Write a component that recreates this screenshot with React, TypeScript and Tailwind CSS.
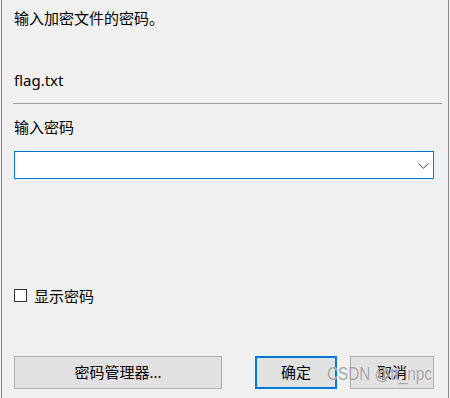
import React from "react";

export default function App() {
  const font = { fontFamily: '"Noto Sans", "Noto Sans CJK SC", sans-serif' };
  return (
    <div
      className="relative w-[450px] h-[398px] bg-[#f0f0f0] overflow-hidden text-[15px] text-black"
      style={font}
    >
      <div className="ml-px w-[448px] h-full border-x border-[#8a8a8a] flex flex-col pl-3 pr-[14px]">
        <div className="mt-2 h-5 leading-5">输入加密文件的密码。</div>
        <div className="mt-[42px] h-5 leading-5">flag.txt</div>
        <div className="mt-[13px] h-px bg-[#a0a0a0] ml-[-1px] mr-[-8px]" />
        <div className="mt-[13px] h-5 leading-5">输入密码</div>
        <div className="mt-[14px] h-7 border border-[#0078d7] bg-white flex items-center justify-end pr-1">
          <svg width="11" height="6" viewBox="0 0 11 6" className="mt-px">
            <path d="M0.5 0.5 L5.5 5.2 L10.5 0.5" fill="none" stroke="#444" strokeWidth="1" />
          </svg>
        </div>
        <div className="mt-[110px] flex items-center gap-[7px] h-[13px]">
          <div className="w-[13px] h-[13px] border border-[#333] bg-white shrink-0" />
          <span className="leading-5">显示密码</span>
        </div>
        <div className="mt-auto mb-[9px] flex h-[33px]">
          <div className="w-[208px] h-full border border-[#adadad] bg-[#e1e1e1] flex items-center justify-center">
            密码管理器...
          </div>
          <div className="ml-[33px] w-[82px] h-full border-2 border-[#0078d7] bg-[#e1e1e1] flex items-center justify-center">
            确定
          </div>
          <div className="ml-[13px] w-[84px] h-full border border-[#adadad] bg-[#e1e1e1] flex items-center justify-center">
            取消
          </div>
        </div>
      </div>
      <div
        className="absolute left-[327px] top-[364px] text-[18px] leading-5 origin-left scale-x-[0.85] whitespace-nowrap text-[#8a8a8a]/80 [text-shadow:0_0_1px_#ffffff]"
        style={{ fontFamily: '"Liberation Sans", sans-serif' }}
      >
        CSDN @tt_npc
      </div>
    </div>
  );
}
